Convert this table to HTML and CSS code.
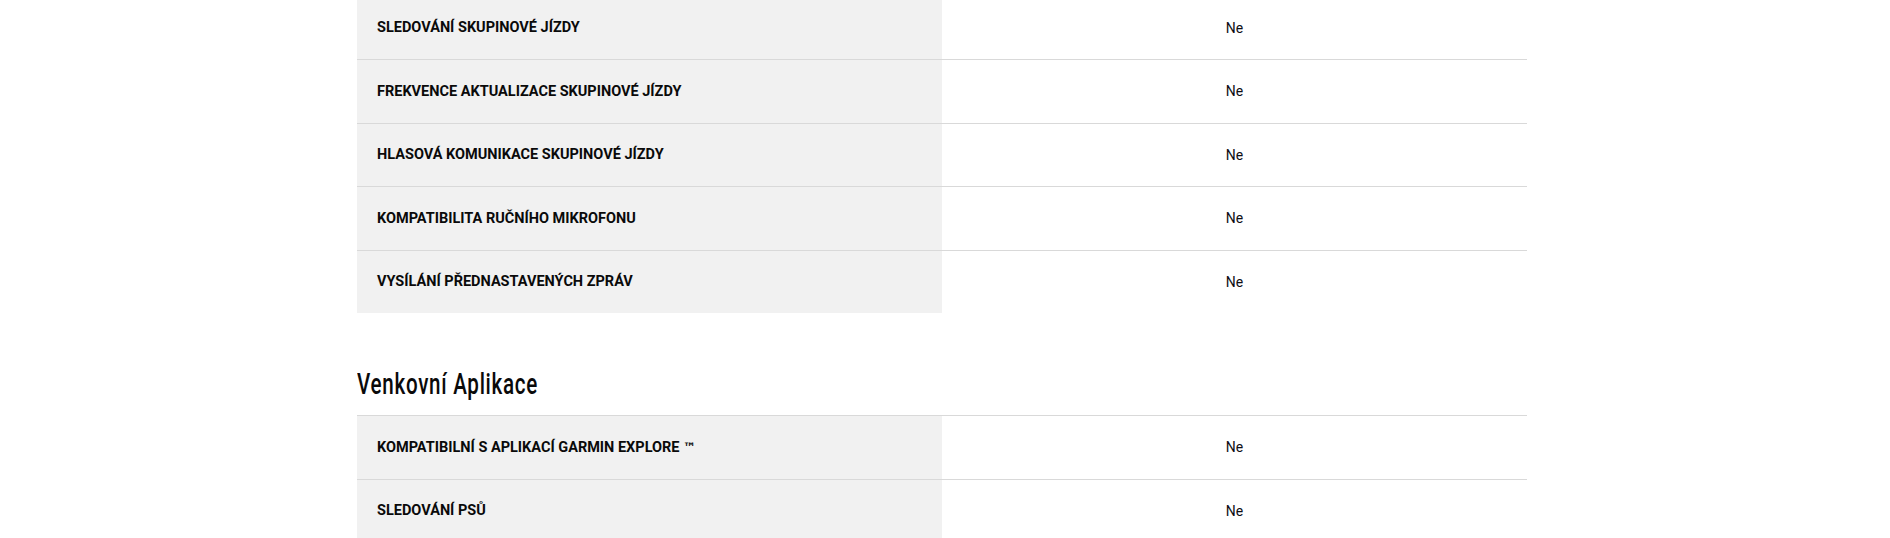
FILE: index.html
```html
<!DOCTYPE html>
<html lang="cs">
<head>
<meta charset="utf-8">
<title>Specifikace</title>
<link rel="stylesheet" href="styles.css">
</head>
<body>
<main class="specs">
  <section class="spec-group spec-group--first">
    <div class="spec-row"><div class="spec-label">Sledování skupinové jízdy</div><div class="spec-value">Ne</div></div>
    <div class="spec-row"><div class="spec-label">Frekvence aktualizace skupinové jízdy</div><div class="spec-value">Ne</div></div>
    <div class="spec-row"><div class="spec-label">Hlasová komunikace skupinové jízdy</div><div class="spec-value">Ne</div></div>
    <div class="spec-row"><div class="spec-label">Kompatibilita ručního mikrofonu</div><div class="spec-value">Ne</div></div>
    <div class="spec-row"><div class="spec-label">Vysílání přednastavených zpráv</div><div class="spec-value">Ne</div></div>
  </section>
  <section class="spec-group">
    <h2 class="spec-title">Venkovní Aplikace</h2>
    <div class="spec-row"><div class="spec-label">Kompatibilní s aplikací Garmin Explore <span class="tm">™</span></div><div class="spec-value">Ne</div></div>
    <div class="spec-row"><div class="spec-label">Sledování psů</div><div class="spec-value">Ne</div></div>
  </section>
</main>
</body>
</html>
```
FILE: styles.css
```css
html, body {
  margin: 0;
  padding: 0;
  background: #ffffff;
}

body {
  font-family: Roboto, "Liberation Sans", sans-serif;
  color: #111111;
}

.specs {
  width: 1170px;
  margin-left: calc(50% - 588px);
}

.spec-group--first {
  margin-top: -4.5px;
}

.spec-row {
  box-sizing: border-box;
  height: 63.5px;
  display: grid;
  grid-template-columns: 1fr 1fr;
  border-top: 1px solid #d9d9d9;
}

.spec-label {
  background: #f1f1f1;
  padding-left: 20px;
  display: flex;
  align-items: center;
  white-space: pre;
  font-size: 14.5px;
  font-weight: 700;
  text-transform: uppercase;
  color: #0a0a0a;
}

.tm {
  font-family: "DejaVu Sans", sans-serif;
  font-size: 13px;
}

.spec-value {
  display: flex;
  align-items: center;
  justify-content: center;
  font-size: 14px;
  color: #0e0e14;
}

.spec-title {
  margin: 57px 0 17px;
  font-family: Roboto, "Liberation Sans", sans-serif;
  font-weight: 500;
  font-size: 29px;
  line-height: 28px;
  letter-spacing: 1px;
  color: #0a0a0a;
  transform: scaleX(0.71);
  transform-origin: left center;
}
```
